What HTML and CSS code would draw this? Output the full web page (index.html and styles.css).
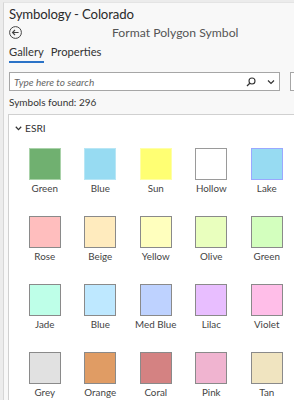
FILE: index.html
```html
<!DOCTYPE html>
<html lang="en">
<head>
    <meta charset="UTF-8">
    <title>Symbology - Colorado</title>
    <link rel="stylesheet" href="styles.css">
</head>
<body>
    <div class="pane">
        <h1 class="pane-title">Symbology - Colorado</h1>

        <div class="sub-header">
            <svg class="back-btn" width="13" height="13" viewBox="0 0 13 13">
                <circle cx="6.5" cy="6.5" r="5.9" fill="none" stroke="#444" stroke-width="1"/>
                <path d="M9.6 6.5H3.6M6 4L3.5 6.5L6 9" fill="none" stroke="#444" stroke-width="1.1"/>
            </svg>
            <span class="sub-title">Format Polygon Symbol</span>
        </div>

        <div class="tabs">
            <span class="tab active">Gallery</span>
            <span class="tab">Properties</span>
        </div>

        <!-- search -->
        <div class="search-row">
            <div class="search-box">
                <span class="placeholder">Type here to search</span>
                <svg class="search-icon" width="10" height="10" viewBox="0 0 10 10">
                    <circle cx="6" cy="4" r="3" fill="none" stroke="#333" stroke-width="1.1"/>
                    <path d="M3.8 6.2L1 9" stroke="#333" stroke-width="1.3"/>
                </svg>
                <svg class="drop-icon" width="8" height="6" viewBox="0 0 8 6">
                    <path d="M1 1.5L4 4.5L7 1.5" fill="none" stroke="#333" stroke-width="1.2"/>
                </svg>
            </div>
            <div class="style-box"></div>
        </div>

        <div class="found">Symbols found: 296</div>

        <!-- gallery -->
        <div class="gallery">
            <div class="group-head">
                <svg width="7" height="5" viewBox="0 0 7 5">
                    <path d="M0.8 0.8L3.5 3.6L6.2 0.8" fill="none" stroke="#333" stroke-width="1.3"/>
                </svg>
                <span>ESRI</span>
            </div>
            <div class="grid">
                <div class="item"><div class="swatch" style="background:#70b070;border-color:#a9d2a9"></div><span>Green</span></div>
                <div class="item"><div class="swatch" style="background:#97dbf2;border-color:#b8e6f5"></div><span>Blue</span></div>
                <div class="item"><div class="swatch" style="background:#ffff73;border-color:#ffffa8"></div><span>Sun</span></div>
                <div class="item"><div class="swatch" style="background:#ffffff;border-color:#9a9a9a"></div><span>Hollow</span></div>
                <div class="item"><div class="swatch" style="background:#97dbf2;border-color:#9aa8ff"></div><span>Lake</span></div>

                <div class="item"><div class="swatch" style="background:#ffbebe"></div><span>Rose</span></div>
                <div class="item"><div class="swatch" style="background:#ffebbe"></div><span>Beige</span></div>
                <div class="item"><div class="swatch" style="background:#ffffbe"></div><span>Yellow</span></div>
                <div class="item"><div class="swatch" style="background:#e9ffbe"></div><span>Olive</span></div>
                <div class="item"><div class="swatch" style="background:#d3ffbe"></div><span>Green</span></div>

                <div class="item"><div class="swatch" style="background:#beffe8"></div><span>Jade</span></div>
                <div class="item"><div class="swatch" style="background:#bee8ff"></div><span>Blue</span></div>
                <div class="item"><div class="swatch" style="background:#bed2ff"></div><span>Med Blue</span></div>
                <div class="item"><div class="swatch" style="background:#e8beff"></div><span>Lilac</span></div>
                <div class="item"><div class="swatch" style="background:#ffbee8"></div><span>Violet</span></div>

                <div class="item"><div class="swatch" style="background:#e1e1e1"></div><span>Grey</span></div>
                <div class="item"><div class="swatch" style="background:#e09c64"></div><span>Orange</span></div>
                <div class="item"><div class="swatch" style="background:#d48282"></div><span>Coral</span></div>
                <div class="item"><div class="swatch" style="background:#f0b4d0"></div><span>Pink</span></div>
                <div class="item"><div class="swatch" style="background:#f0e4c0"></div><span>Tan</span></div>
            </div>
        </div>
    </div>
</body>
</html>
```

FILE: styles.css
```css
* {
    box-sizing: border-box;
    margin: 0;
    padding: 0;
}

body {
    font-family: 'Lato', 'Open Sans', sans-serif;
    background: #ececec;
    color: #333;
    overflow: hidden;
    width: 294px;
    height: 400px;
}

.pane {
    margin: 2px 0 0 3px;
    width: 340px;
    height: 398px;
    background: #f8f8f8;
    border-left: 1px solid #d6d6d6;
    border-top: 1px solid #e4e4e4;
}

.pane-title {
    font-size: 13.2px;
    font-weight: 400;
    line-height: 20px;
    letter-spacing: -0.15px;
    padding: 1px 0 0 5px;
    color: #2b2b2b;
}

.sub-header {
    display: flex;
    align-items: center;
    height: 16px;
    padding-left: 5px;
}

.back-btn {
    display: block;
}

.sub-title {
    font-size: 12.2px;
    color: #555;
    margin-left: 90px;
}

.tabs {
    display: flex;
    gap: 7px;
    margin-top: 1px;
    padding-left: 5px;
    height: 22px;
}

.tab {
    font-size: 11.2px;
    line-height: 16px;
    color: #333;
    padding-top: 3px;
    height: 22px;
}

.tab.active {
    border-bottom: 2px solid #2b73c7;
}

.search-row {
    display: flex;
    gap: 10px;
    margin-top: 9px;
    padding-left: 5px;
}

.search-box {
    width: 271px;
    height: 19px;
    background: #fff;
    border: 1px solid #a6a6a6;
    display: flex;
    align-items: center;
    padding: 0 4px 0 4px;
}

.placeholder {
    flex: 1;
    font-size: 10px;
    font-style: italic;
    color: #666;
}

.search-icon {
    margin-right: 11px;
}

.style-box {
    width: 30px;
    height: 19px;
    background: #fff;
    border: 1px solid #a6a6a6;
}

.found {
    font-size: 10px;
    line-height: 14px;
    margin-top: 4px;
    padding-left: 5px;
    color: #333;
}

.gallery {
    margin: 5px 0 0 4px;
    background: #fff;
    border: 1px solid #d0d0d0;
    height: 300px;
}

.group-head {
    display: flex;
    align-items: center;
    gap: 3px;
    height: 26px;
    padding-left: 6px;
    font-size: 10.2px;
    color: #333;
}

.grid {
    display: grid;
    grid-template-columns: repeat(5, 55.5px);
    grid-auto-rows: 68px;
    padding: 7px 0 0 8px;
}

.item {
    display: flex;
    flex-direction: column;
    align-items: center;
}

.swatch {
    width: 32px;
    height: 32px;
    border: 1px solid #8a8a8a;
}

.item span {
    font-size: 9.8px;
    line-height: 14px;
    margin-top: 1px;
    color: #444;
}
```
